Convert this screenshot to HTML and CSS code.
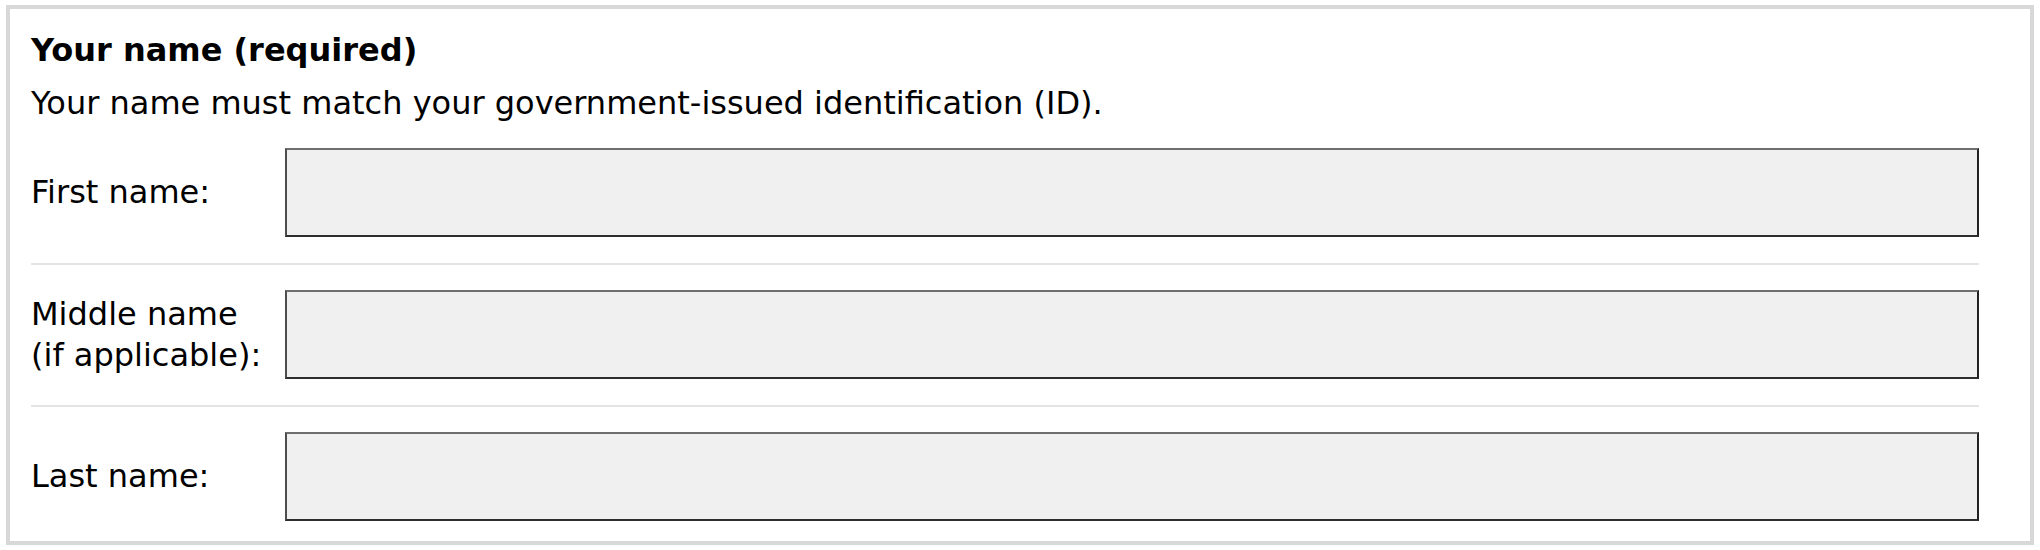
FILE: index.html
```html
<!DOCTYPE html>
<html lang="en">
<head>
  <meta charset="UTF-8" />
  <meta name="viewport" content="width=device-width, initial-scale=1.0"/>
  <title>Your name</title>
  <link rel="stylesheet" href="styles.css">
</head>
<body>

  <div class="panel">
    <h2 class="panel-title">Your name (required)</h2>
    <p class="hint">Your name must match your government-issued identification (ID).</p>

    <div class="fields">
      <div class="row">
        <label for="firstName">First name:</label>
        <input type="text" id="firstName" name="firstName" />
      </div>
      <div class="row">
        <label for="middleName">Middle name (if applicable):</label>
        <input type="text" id="middleName" name="middleName" />
      </div>
      <div class="row">
        <label for="lastName">Last name:</label>
        <input type="text" id="lastName" name="lastName" />
      </div>
    </div>
  </div>

</body>
</html>
```

FILE: styles.css
```css
body {
  font-family: "DejaVu Sans", Arial, sans-serif;
  font-size: 32px;
  color: #000;
  background: #fff;
  margin: 0;
  padding: 5px 6px 6px 6px;
}

.panel {
  border: 4px solid #d8d8d8;
  padding: 23px 51px 0 21px;
}

.panel-title {
  margin: 0;
  font-size: 32px;
  font-weight: bold;
  line-height: 37px;
}

.hint {
  margin: 16px 0 0;
  line-height: 37px;
}

.row {
  display: grid;
  grid-template-columns: 240px 1fr;
  column-gap: 14px;
  align-items: center;
  padding: 25px 0 26px;
}

.row:first-child {
  padding-top: 26px;
}

.row + .row {
  border-top: 2px solid #e4e4e4;
}

.row:last-child {
  padding-bottom: 20px;
}

.row label {
  line-height: 41px;
}

.row input {
  height: 89px;
  box-sizing: border-box;
  margin: 0;
  background: #f0f0f0;
  border: 2px solid;
  border-color: #6e6e6e #222 #2e2e2e #4d4d4d;
  border-radius: 0;
  font-family: inherit;
  font-size: 32px;
  padding: 0 12px;
}
```
